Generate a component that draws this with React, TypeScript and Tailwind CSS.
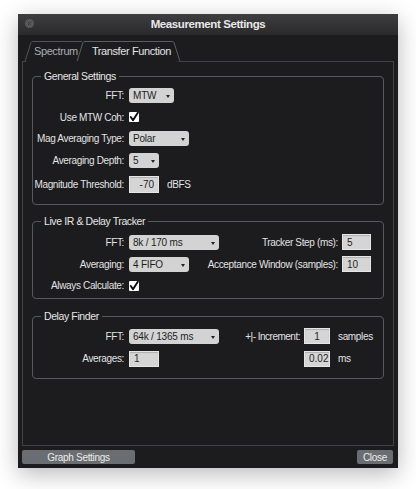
import type { ReactNode } from "react";

const FONT = { fontFamily: '"Liberation Sans", Arial, Helvetica, sans-serif' };

function Select({ value, width }: { value: string; width: string }) {
  return (
    <div
      className={`relative flex h-[15px] items-center rounded-[3px] bg-[#d3d3d3] pl-[4px] text-[10px] tracking-[-0.2px] text-[#1e1e1e] ${width}`}
    >
      <span>{value}</span>
      <span className="absolute right-[4px] top-[7px] h-0 w-0 border-x-[2.5px] border-t-[3px] border-x-transparent border-t-[#222]" />
    </div>
  );
}

function Field({ value, width, align = "text-left" }: { value: string; width: string; align?: string }) {
  return (
    <div
      className={`flex h-[16px] items-center border border-[#e6e6e6] bg-[#d5d5d5] px-[4px] text-[10px] text-[#262626] shadow-[inset_0_1px_1px_rgba(0,0,0,0.18)] ${width} ${align}`}
    >
      <span className="w-full">{value}</span>
    </div>
  );
}

function Check() {
  return (
    <div className="flex h-[10px] w-[10px] items-center justify-center rounded-[1px] bg-white">
      <svg viewBox="0 0 10 10" className="h-[10px] w-[10px]">
        <path d="M1.8 5 L4 8.2 L8.8 0.8" fill="none" stroke="#0a0a0a" strokeWidth="1.9" strokeLinecap="round" strokeLinejoin="round" />
      </svg>
    </div>
  );
}

function Label({ children, className = "" }: { children: ReactNode; className?: string }) {
  return (
    <span className={`text-[10px] tracking-[-0.35px] text-[#e2e2e2] ${className}`}>{children}</span>
  );
}

function Row({ label, h, children }: { label: string; h: string; children: ReactNode }) {
  return (
    <div className={`flex items-center ${h}`}>
      <Label className="w-[91px] shrink-0 text-right">{label}</Label>
      <div className="ml-[5px] flex flex-1 items-center">{children}</div>
    </div>
  );
}

function Group({ title, className, children }: { title: string; className: string; children: ReactNode }) {
  return (
    <div className={`relative rounded-[4px] border border-[#55595e] ${className}`}>
      <span className="absolute -top-[8px] left-[8px] bg-[#1c1c1f] px-[3px] text-[10.5px] leading-[14px] tracking-[-0.4px] text-[#e6e6e6]">
        {title}
      </span>
      {children}
    </div>
  );
}

export default function App() {
  return (
    <div className="h-[489px] w-[416px] bg-white pl-[18px] pt-[14px]" style={FONT}>
      <div className="flex h-[454px] w-[380px] flex-col bg-[#1c1c1f] shadow-[0_6px_22px_rgba(0,0,0,0.28)]">
        {/* title bar */}
        <div className="relative flex h-[21px] items-center justify-center bg-gradient-to-b from-[#3e3e40] to-[#2a2a2c]">
          <div className="absolute left-[7px] top-[5px] flex h-[9px] w-[9px] items-center justify-center rounded-full bg-[#58585b]">
            <svg viewBox="0 0 9 9" className="h-[9px] w-[9px]">
              <path d="M3 3 L6 6 M6 3 L3 6" stroke="#3a3a3c" strokeWidth="1" />
            </svg>
          </div>
          <span className="text-[11.5px] font-bold tracking-[-0.4px] text-[#e8e8e8]">Measurement Settings</span>
        </div>

        <div className="flex flex-1 flex-col px-[4px] pt-[6px]">
          {/* tabs */}
          <div className="relative z-10 -mb-[1px] flex h-[21px] items-center text-[11px] tracking-[-0.4px]">
            <svg viewBox="0 0 372 21" className="absolute inset-0 h-[21px] w-[372px]">
              <path d="M3 20.5 L9 1.5 Q9.5 0.5 11 0.5 L60 0.5" fill="none" stroke="#505358" strokeWidth="1" />
              <path d="M55 20.5 L61 1.5 Q61.5 0.5 63 0.5 L150 0.5 Q151.5 0.5 152 1.5 L158 20.5" fill="#1c1c1f" stroke="#5a5e63" strokeWidth="1" />
              <path d="M4 20.5 L154.5 20.5" stroke="#1c1c1f" strokeWidth="1.2" />
            </svg>
            <span className="relative ml-[12px] text-[#a9adb2]">Spectrum</span>
            <span className="relative ml-[14px] text-[#e4e4e4]">Transfer Function</span>
          </div>

          {/* panel */}
          <div className="flex h-[385px] flex-col border border-[#404246] px-[9px] pt-[14px]">
            <Group title="General Settings" className="pb-[7px] pt-[8px]">
              <Row label="FFT:" h="h-[21px]">
                <Select value="MTW" width="w-[45px]" />
              </Row>
              <Row label="Use MTW Coh:" h="h-[22px]">
                <Check />
              </Row>
              <Row label="Mag Averaging Type:" h="h-[21px]">
                <Select value="Polar" width="w-[60px]" />
              </Row>
              <Row label="Averaging Depth:" h="h-[22px]">
                <Select value="5" width="w-[30px]" />
              </Row>
              <Row label="Magnitude Threshold:" h="h-[26px]">
                <Field value="-70" width="w-[30px] h-[17px]" align="text-right" />
                <Label className="ml-[8px]">dBFS</Label>
              </Row>
            </Group>

            <Group title="Live IR &amp; Delay Tracker" className="mt-[16px] pb-[2px] pt-[9px]">
              <Row label="FFT:" h="h-[22px]">
                <Select value="8k / 170 ms" width="w-[90px]" />
                <Label className="flex-1 text-right">Tracker Step (ms):</Label>
                <div className="ml-[4px] mr-[12px]">
                  <Field value="5" width="w-[29px]" />
                </div>
              </Row>
              <Row label="Averaging:" h="h-[22px]">
                <Select value="4 FIFO" width="w-[60px]" />
                <Label className="flex-1 text-right">Acceptance Window (samples):</Label>
                <div className="ml-[4px] mr-[12px]">
                  <Field value="10" width="w-[29px]" />
                </div>
              </Row>
              <Row label="Always Calculate:" h="h-[21px]">
                <Check />
              </Row>
            </Group>

            <Group title="Delay Finder" className="mt-[17px] pb-[8px] pt-[8px]">
              <Row label="FFT:" h="h-[22px]">
                <Select value="64k / 1365 ms" width="w-[90px]" />
                <span className="flex-1 text-right text-[10px] tracking-[-0.5px] text-[#e2e2e2]">+|- Increment:</span>
                <div className="ml-[4px]">
                  <Field value="1" width="w-[26px]" align="text-center" />
                </div>
                <Label className="ml-[8px] w-[45px]">samples</Label>
              </Row>
              <Row label="Averages:" h="h-[23px]">
                <Field value="1" width="w-[30px]" />
                <div className="ml-auto">
                  <Field value="0.02" width="w-[26px]" align="text-center" />
                </div>
                <Label className="ml-[8px] w-[45px]">ms</Label>
              </Row>
            </Group>
          </div>

          {/* buttons */}
          <div className="mt-[4px] flex items-center justify-between pr-[1px]">
            <button className="flex h-[14px] w-[113px] items-center justify-center rounded-[2px] bg-[#6a6d71] text-[10px] tracking-[-0.3px] text-[#ececec]">
              Graph Settings
            </button>
            <button className="flex h-[14px] w-[36px] items-center justify-center rounded-[2px] bg-[#6a6d71] text-[10px] tracking-[-0.3px] text-[#ececec]">
              Close
            </button>
          </div>
        </div>
      </div>
    </div>
  );
}
